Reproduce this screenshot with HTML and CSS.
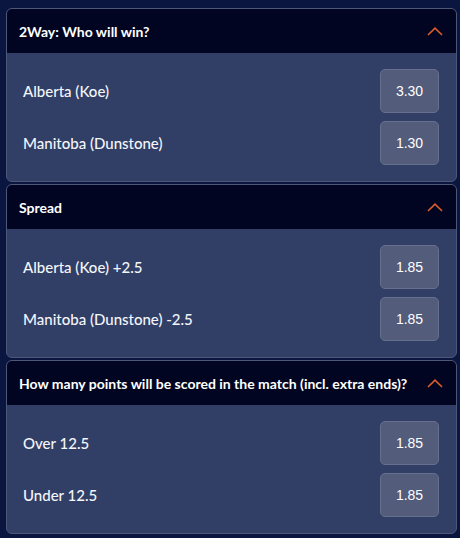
FILE: index.html
```html
<!DOCTYPE html>
<html>
<head>
<meta charset="utf-8">
<link rel="stylesheet" href="styles.css">
</head>
<body>
<div class="markets">
  <section class="market">
    <header class="market-head">
      <span class="market-title">2Way: Who will win?</span>
      <svg class="chev" width="16" height="9" viewBox="0 0 16 9"><path d="M1 8 L8 1.2 L15 8" fill="none" stroke="#dc5d26" stroke-width="1.6"/></svg>
    </header>
    <div class="market-body">
      <div class="row"><span class="label">Alberta (Koe)</span><button class="odd">3.30</button></div>
      <div class="row"><span class="label">Manitoba (Dunstone)</span><button class="odd">1.30</button></div>
    </div>
  </section>
  <section class="market">
    <header class="market-head">
      <span class="market-title">Spread</span>
      <svg class="chev" width="16" height="9" viewBox="0 0 16 9"><path d="M1 8 L8 1.2 L15 8" fill="none" stroke="#dc5d26" stroke-width="1.6"/></svg>
    </header>
    <div class="market-body">
      <div class="row"><span class="label">Alberta (Koe) +2.5</span><button class="odd">1.85</button></div>
      <div class="row"><span class="label">Manitoba (Dunstone) -2.5</span><button class="odd">1.85</button></div>
    </div>
  </section>
  <section class="market">
    <header class="market-head">
      <span class="market-title">How many points will be scored in the match (incl. extra ends)?</span>
      <svg class="chev" width="16" height="9" viewBox="0 0 16 9"><path d="M1 8 L8 1.2 L15 8" fill="none" stroke="#dc5d26" stroke-width="1.6"/></svg>
    </header>
    <div class="market-body">
      <div class="row"><span class="label">Over 12.5</span><button class="odd">1.85</button></div>
      <div class="row"><span class="label">Under 12.5</span><button class="odd">1.85</button></div>
    </div>
  </section>
</div>
</body>
</html>
```
FILE: styles.css
```css
html, body {
  margin: 0;
  padding: 0;
  background: #0a1640;
  height: 100%;
}
body {
  font-family: Lato, "Noto Sans", sans-serif;
  color: #eef0f6;
}
.markets {
  display: flex;
  flex-direction: column;
  gap: 2px;
  padding: 8px 3px 0 6px;
}
.market {
  border: 1px solid #4d5878;
  border-radius: 6px;
  overflow: hidden;
  background: #313f66;
}
.market-head {
  height: 44px;
  background: #010521;
  display: flex;
  align-items: center;
  justify-content: space-between;
  padding: 0 13px 0 12px;
}
.market-title {
  font-weight: 700;
  font-size: 14px;
  color: #ffffff;
}
.chev {
  display: block;
}
.market-body {
  padding: 16px 17px 16px 16px;
  display: flex;
  flex-direction: column;
  gap: 8px;
}
.row {
  display: flex;
  align-items: center;
  justify-content: space-between;
  height: 44px;
}
.label {
  font-size: 15px;
  font-weight: 500;
  color: #f4f6fa;
}
.odd {
  width: 59px;
  height: 44px;
  box-sizing: border-box;
  background: #535c7b;
  border: 1px solid #666f8d;
  border-radius: 5px;
  color: #ffffff;
  font-family: "Liberation Sans", Arial, sans-serif;
  font-size: 14px;
  padding: 0;
}
```
